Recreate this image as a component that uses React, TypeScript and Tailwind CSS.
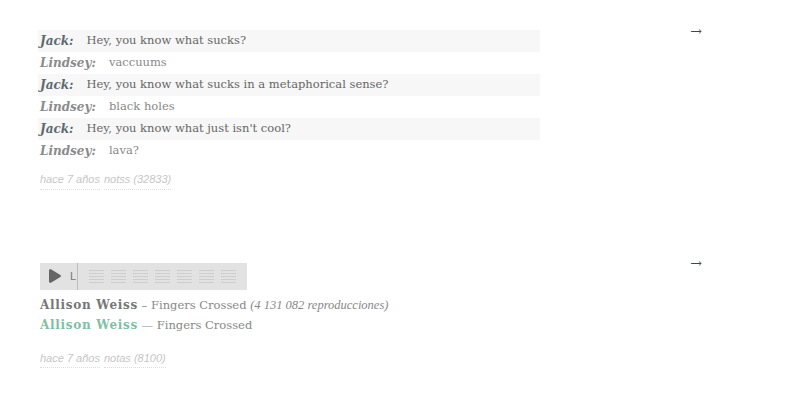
import { FaPlay } from 'react-icons/fa';

const lines = [
  { who: 'Jack', text: 'Hey, you know what sucks?' },
  { who: 'Lindsey', text: 'vaccuums' },
  { who: 'Jack', text: 'Hey, you know what sucks in a metaphorical sense?' },
  { who: 'Lindsey', text: 'black holes' },
  { who: 'Jack', text: "Hey, you know what just isn't cool?" },
  { who: 'Lindsey', text: 'lava?' },
];

function Meta({ notes }: { notes: string }) {
  return (
    <div className="flex gap-[4px] text-[11px] italic text-[#c6c6c6] font-['Liberation_Sans',Arial,sans-serif]">
      <span className="border-b border-dotted border-[#dcdcdc] pb-[1px]">hace 7 años</span>
      <span className="border-b border-dotted border-[#dcdcdc] pb-[1px]">{notes}</span>
    </div>
  );
}

function EqBlock() {
  return (
    <div className="flex flex-col gap-[2px] w-[15px]">
      {[0, 1, 2, 3, 4].map((i) => (
        <div key={i} className="h-[1px] bg-[#cdcdcd]" />
      ))}
    </div>
  );
}

export default function App() {
  return (
    <div className="w-[800px] h-[400px] bg-white font-['DejaVu_Serif',serif]">
      <div className="pl-[38px] pt-[30px] w-[740px] flex">
        <div className="w-[502px]">
          {lines.map((l, i) => (
            <div
              key={i}
              className={`h-[22px] flex items-center pl-[2px] ${l.who === 'Jack' ? 'bg-[#f7f7f7]' : ''}`}
            >
              <span className={`text-[12px] font-bold italic mr-[13px] ${l.who === 'Jack' ? 'text-[#5d6a70]' : 'text-[#8b8b8b]'}`}>
                {l.who}:
              </span>
              <span className={`text-[11.5px] ${l.who === 'Jack' ? 'text-[#666]' : 'text-[#888]'}`}>{l.text}</span>
            </div>
          ))}
          <div className="pl-[2px] mt-[9px]">
            <Meta notes="notss (32833)" />
          </div>
        </div>
        <div className="ml-auto text-[14px] text-[#444] -mt-[9px] mr-[38px]">→</div>
      </div>

      <div className="pl-[40px] pt-[73px] w-[740px] flex">
        <div>
          <div className="w-[207px] h-[27px] bg-[#e2e2e2] flex items-center">
            <FaPlay className="ml-[9px] text-[#666] w-[12px] h-[14px]" />
            <span className="ml-[9px] text-[11px] text-[#777] font-['Liberation_Sans',sans-serif]">L</span>
            <div className="ml-[1px] w-[1px] h-[27px] bg-[#bdbdbd]" />
            <div className="ml-[11px] flex gap-[7px]">
              {[0, 1, 2, 3, 4, 5, 6].map((i) => (
                <EqBlock key={i} />
              ))}
            </div>
          </div>
          <div className="mt-[5px] text-[11.5px] leading-[20px] text-[#888]">
            <div>
              <span className="text-[12px] tracking-[0.7px] font-bold text-[#777]">Allison Weiss</span> – Fingers Crossed{' '}
              <span className="italic text-[12.5px] font-['Liberation_Serif',serif]">(4 131 082 reproducciones)</span>
            </div>
            <div>
              <span className="text-[12px] tracking-[0.7px] font-bold text-[#7fbfa5]">Allison Weiss</span> — Fingers Crossed
            </div>
          </div>
          <div className="mt-[15px]">
            <Meta notes="notas (8100)" />
          </div>
        </div>
        <div className="ml-auto text-[14px] text-[#444] -mt-[10px] mr-[38px]">→</div>
      </div>
    </div>
  );
}
